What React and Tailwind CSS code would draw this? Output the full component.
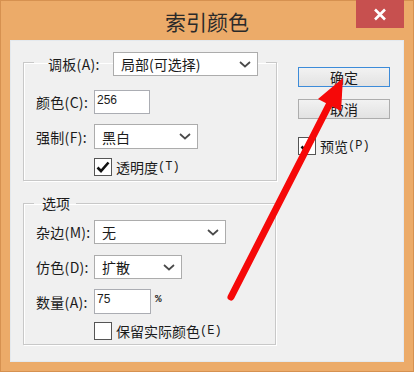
import React from "react";

const CJK = "font-['Noto_Sans_CJK_SC','Noto_Sans',sans-serif]";

function Chevron() {
  return (
    <svg width="12" height="7" viewBox="0 0 12 7" className="shrink-0">
      <path d="M1 1 L6 5.5 L11 1" fill="none" stroke="#4a4a4a" strokeWidth="1.7" />
    </svg>
  );
}

function Select({ value, width, height = 24 }) {
  return (
    <div
      className="flex items-center justify-between bg-white border border-[#acacac] pl-[7px] pr-[6px] text-[14px] leading-none"
      style={{ width, height }}
    >
      <span>{value}</span>
      <Chevron />
    </div>
  );
}

function Input({ value, width, height = 24 }) {
  return (
    <div
      className="bg-white border border-[#abadb3] pl-[2px] pt-[3px] text-[12px] leading-none font-['Liberation_Sans',sans-serif]"
      style={{ width, height }}
    >
      {value}
    </div>
  );
}

function Checkbox({ checked, label, hint }) {
  return (
    <div className="flex items-center h-[19px]">
      <div className="w-[18px] h-[18px] bg-white border border-[#555] flex items-center justify-center">
        {checked && (
          <svg width="14" height="12" viewBox="0 0 14 12">
            <path d="M1.5 6.5 L5 10 L12.5 1.5" fill="none" stroke="#111" strokeWidth="2.6" />
          </svg>
        )}
      </div>
      <span className="ml-[4px] text-[14px] leading-none">{label}</span>
      <span className="text-[12px] leading-none font-['Liberation_Mono',monospace]">{hint}</span>
    </div>
  );
}

// labels have a fixed column so the controls line up at the same x
function Row({ label, children, className = "" }) {
  return (
    <div className={`flex items-center ${className}`}>
      <span className="w-[60px] pl-[2px] text-[14px] leading-none tracking-[0.3px] whitespace-nowrap">{label}</span>
      {children}
    </div>
  );
}

function Button({ children, primary }) {
  return (
    <div
      className={`h-[20px] w-[92px] flex items-center justify-center text-[14px] leading-none bg-gradient-to-b from-[#f2f2f2] to-[#e2e2e2] border ${
        primary ? "border-[#3c8bd9]" : "border-[#adadad]"
      }`}
    >
      {children}
    </div>
  );
}

function Arrow() {
  return (
    <svg
      width="414"
      height="372"
      viewBox="0 0 414 372"
      className="absolute left-[-1px] top-[-1px] pointer-events-none"
    >
      <line x1="231" y1="297" x2="330" y2="103" stroke="#f60808" strokeWidth="7" strokeLinecap="round" />
      <polygon points="343,78 318,99 341,111" fill="#f60808" />
    </svg>
  );
}

export default function App() {
  return (
    <div className={`relative w-[414px] h-[372px] bg-[#ecab69] border border-[#d69150] flex flex-col text-[#1b1b1b] ${CJK}`}>
      {/* title bar */}
      <div className="h-[39px] grid grid-cols-[1fr_auto_1fr]">
        <div />
        <div className="pt-[4px] text-[21px] leading-[32px] text-[#2a2a2a]">索引颜色</div>
        <div className="flex justify-end pr-[9px]">
          <div className="-mt-[1px] w-[48px] h-[28px] bg-[#c7504f] flex items-center justify-center">
            <svg width="14" height="13" viewBox="0 0 14 13">
              <path d="M2 1.5 L12 11.5 M12 1.5 L2 11.5" stroke="#fff" strokeWidth="2.6" />
            </svg>
          </div>
        </div>
      </div>

      {/* client area */}
      <div className="flex-1 mx-[9px] mb-[9px] bg-[#f0f0f0] border border-[#e4e9ee] flex pl-[12px] pt-[11px]">
        <div className="w-[253px] flex flex-col">
          <fieldset className="border border-[#c8c8c8] shadow-[inset_1px_1px_0_#fff,1px_1px_0_#fff] px-[10px] pb-[4px]">
            <legend className="pl-[14px] pr-[8px] h-[20px] flex items-start">
              <span className="w-[65px] h-[24px] flex items-center text-[14px] leading-none tracking-[0.3px]">调板(A):</span>
              <Select value="局部(可选择)" width={145} />
            </legend>
            <Row label="颜色(C):" className="mt-[18px]">
              <Input value="256" width={56} />
            </Row>
            <Row label="强制(F):" className="mt-[10px]">
              <Select value="黑白" width={104} height={25} />
            </Row>
            <div className="mt-[8px] pl-[60px]">
              <Checkbox checked label="透明度" hint="(T)" />
            </div>
          </fieldset>

          <fieldset className="mt-[12px] border border-[#c8c8c8] shadow-[inset_1px_1px_0_#fff,1px_1px_0_#fff] px-[10px] pb-[4px]">
            <legend className="pl-[8px] pr-[6px] h-[20px] flex items-center text-[14px] leading-none">选项</legend>
            <Row label="杂边(M):" className="mt-[7px]">
              <Select value="无" width={132} />
            </Row>
            <Row label="仿色(D):" className="mt-[11px]">
              <Select value="扩散" width={88} />
            </Row>
            <Row label="数量(A):" className="mt-[10px]">
              <Input value="75" width={57} height={25} />
              <span className="ml-[4px] -mt-[5px] text-[11px] leading-none font-bold font-['Liberation_Mono',monospace]">%</span>
            </Row>
            <div className="mt-[7px] pl-[60px]">
              <Checkbox label="保留实际颜色" hint="(E)" />
            </div>
          </fieldset>
        </div>

        <div className="ml-[22px] mt-[15px] flex flex-col">
          <Button primary>确定</Button>
          <div className="mt-[12px]">
            <Button>取消</Button>
          </div>
          <div className="mt-[17px]">
            <Checkbox checked label="预览" hint="(P)" />
          </div>
        </div>
      </div>

      <Arrow />
    </div>
  );
}
